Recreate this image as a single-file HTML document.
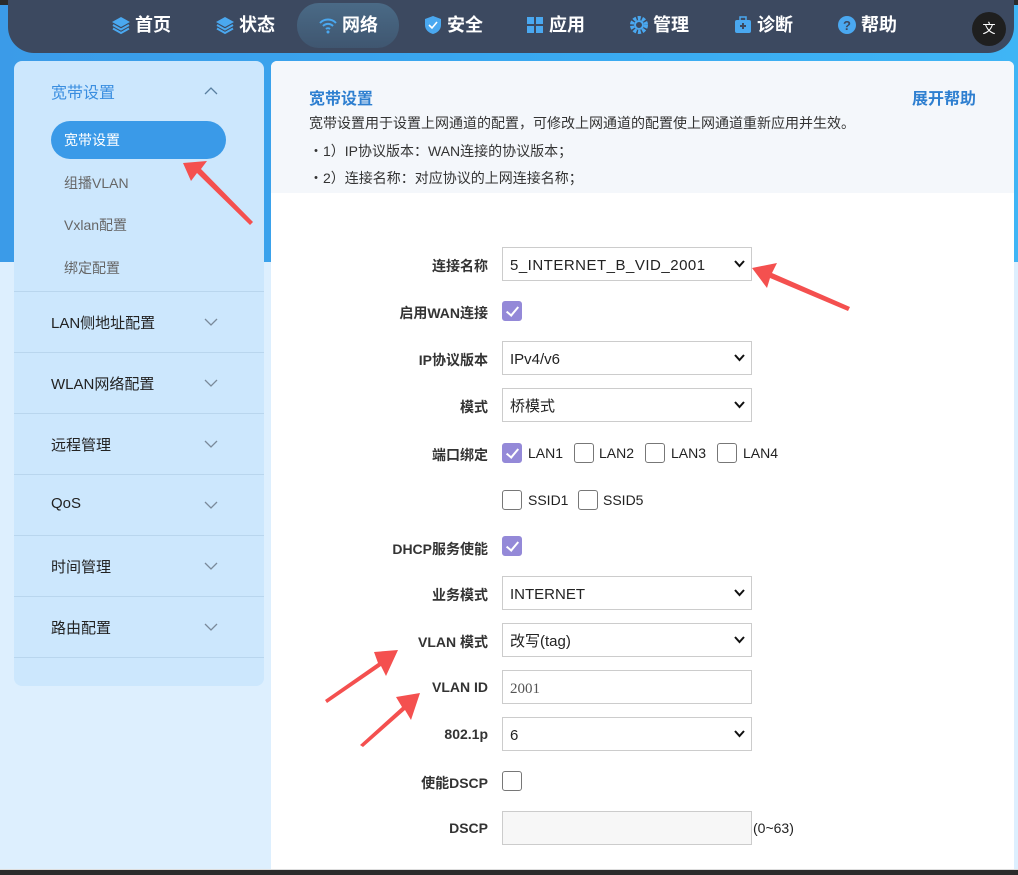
<!DOCTYPE html>
<html><head><meta charset="utf-8"><style>
*{margin:0;padding:0;box-sizing:border-box}
body{width:1018px;height:875px;overflow:hidden;position:relative;font-family:"Liberation Sans","Noto Sans CJK SC",sans-serif;background:#ddeffe}
.top{position:absolute;left:0;top:0;width:1018px;height:262px;background:linear-gradient(90deg,#3b9be8,#39a8f0 50%,#3fb5f5)}
.strip{position:absolute;left:0;top:0;width:1018px;height:5px;background:#2b2b2b}
.nav{position:absolute;left:8px;top:0;width:1006px;height:53px;background:#3c4960;border-radius:0 0 26px 26px}
.ni{position:absolute;top:13px;color:#fff;font-weight:bold;font-size:18px;line-height:24px;display:flex;align-items:center;gap:4px}
.ni svg{width:20px;height:20px}
.act{position:absolute;left:289px;top:3px;width:102px;height:45px;border-radius:22px;background:linear-gradient(#4a6a86,#3f5670)}
.side{position:absolute;left:14px;top:61px;width:250px;height:625px;background:#cce7fd;border-radius:8px}
.s1{position:absolute;left:37px;font-size:16px;color:#222}
.sub{position:absolute;left:50px;font-size:14px;color:#666}
.hr{position:absolute;left:0;width:250px;height:1px;background:#b9d6ee}
.chev{position:absolute;left:190px;width:14px;height:8px}
.main{position:absolute;left:271px;top:61px;width:743px;height:808px;background:#fff;border-radius:6px 6px 0 0}
.mh{position:absolute;left:0;top:0;width:743px;height:132px;background:#f4f7fb;border-radius:6px 6px 0 0}
.lab{position:absolute;right:530px;font-size:14px;font-weight:bold;color:#333;text-align:right;white-space:nowrap}
.fld{position:absolute;left:502px;width:250px;height:34px;border:1px solid #ccc;background:#fff;font-size:15px;color:#222;padding-left:7px;line-height:36px}
.fld .dd{position:absolute;right:6px;top:12px;width:11px;height:8px}
.cb{position:absolute;width:20px;height:20px;border:1px solid #777;border-radius:3px;background:#fff}
.cb.on{background:#9489d8;border-color:#9489d8}
.cb.on::after{content:"";position:absolute;left:6px;top:2px;width:5px;height:10px;border:solid #fff;border-width:0 2.5px 2.5px 0;transform:rotate(40deg)}
.cl{position:absolute;font-size:14px;color:#222}
.bot{position:absolute;left:0;top:869px;width:1018px;height:6px;background:#2b2b2b;border-top:1px solid #ddd}
</style></head><body>
<div class="top"></div>
<div class="strip"></div>
<div class="nav">
<div class="act"></div>
<div class="ni" style="left:103px"><svg viewBox="0 0 20 20"><path d="M10 2L19 7 10 12 1 7Z" fill="#4aa8f0"/><path d="M2 10l8 4.5 8-4.5M2 13.5l8 4.5 8-4.5" stroke="#4aa8f0" stroke-width="2" fill="none"/></svg>首页</div>
<div class="ni" style="left:207px"><svg viewBox="0 0 20 20"><path d="M10 2L19 7 10 12 1 7Z" fill="#4aa8f0"/><path d="M2 10l8 4.5 8-4.5M2 13.5l8 4.5 8-4.5" stroke="#4aa8f0" stroke-width="2" fill="none"/></svg>状态</div>
<div class="ni" style="left:310px"><svg viewBox="0 0 20 20"><path d="M2 8a11 11 0 0 1 16 0M5 11a7 7 0 0 1 10 0M8 14a3 3 0 0 1 4 0" stroke="#4aa8f0" stroke-width="2" fill="none"/><circle cx="10" cy="17" r="1.5" fill="#4aa8f0"/></svg>网络</div>
<div class="ni" style="left:415px"><svg viewBox="0 0 20 20"><path d="M10 1L18 4V10C18 15 14 18 10 19 6 18 2 15 2 10V4Z" fill="#4aa8f0"/><path d="M6 10l3 3 5-6" stroke="#fff" stroke-width="1.6" fill="none"/></svg>安全</div>
<div class="ni" style="left:517px"><svg viewBox="0 0 20 20"><rect x="2" y="2" width="7" height="7" fill="#4aa8f0"/><rect x="11" y="2" width="7" height="7" fill="#4aa8f0"/><rect x="2" y="11" width="7" height="7" fill="#4aa8f0"/><rect x="11" y="11" width="7" height="7" fill="#4aa8f0"/></svg>应用</div>
<div class="ni" style="left:621px"><svg viewBox="0 0 20 20"><circle cx="10" cy="10" r="7" stroke="#4aa8f0" stroke-width="4" fill="none" stroke-dasharray="3 1.5"/><circle cx="10" cy="10" r="4" stroke="#4aa8f0" stroke-width="2" fill="none"/></svg>管理</div>
<div class="ni" style="left:725px"><svg viewBox="0 0 20 20"><rect x="2" y="5" width="16" height="13" rx="2" fill="#4aa8f0"/><rect x="7" y="2" width="6" height="4" stroke="#4aa8f0" stroke-width="1.5" fill="none"/><path d="M10 8v6M7 11h6" stroke="#3c4960" stroke-width="2"/></svg>诊断</div>
<div class="ni" style="left:829px"><svg viewBox="0 0 20 20"><circle cx="10" cy="10" r="9" fill="#4aa8f0"/><text x="10" y="15" font-size="13" text-anchor="middle" fill="#3c4960" font-weight="bold" font-family="Liberation Sans">?</text></svg>帮助</div>
<div style="position:absolute;left:964px;top:12px;width:34px;height:34px;border-radius:17px;background:#1f1f1f;color:#fff;font-size:13px;text-align:center;line-height:34px">文</div>
</div>

<div class="side">
<div class="s1" style="top:18px;color:#3a8ee0">宽带设置</div>
<svg class="chev" style="top:26px" viewBox="0 0 14 8"><path d="M1 7L7 1 13 7" stroke="#5a7fa0" stroke-width="1.3" fill="none"/></svg>
<div style="position:absolute;left:37px;top:60px;width:175px;height:38px;border-radius:19px;background:#3a9ae8"></div>
<div class="sub" style="top:69px;color:#fff">宽带设置</div>
<div class="sub" style="top:112px">组播VLAN</div>
<div class="sub" style="top:154px">Vxlan配置</div>
<div class="sub" style="top:197px">绑定配置</div>
<div class="hr" style="top:230px"></div>
<div class="s1" style="top:251px;font-size:15px">LAN侧地址配置</div>
<div class="hr" style="top:291px"></div>
<div class="s1" style="top:312px;font-size:15px">WLAN网络配置</div>
<div class="hr" style="top:352px"></div>
<div class="s1" style="top:373px;font-size:15px">远程管理</div>
<div class="hr" style="top:413px"></div>
<div class="s1" style="top:434px;font-size:15px">QoS</div>
<div class="hr" style="top:474px"></div>
<div class="s1" style="top:495px;font-size:15px">时间管理</div>
<div class="hr" style="top:535px"></div>
<div class="s1" style="top:556px;font-size:15px">路由配置</div>
<div class="hr" style="top:596px"></div>
<svg class="chev" style="top:257px" viewBox="0 0 14 8"><path d="M1 1L7 7 13 1" stroke="#7a8a9a" stroke-width="1.3" fill="none"/></svg>
<svg class="chev" style="top:318px" viewBox="0 0 14 8"><path d="M1 1L7 7 13 1" stroke="#7a8a9a" stroke-width="1.3" fill="none"/></svg>
<svg class="chev" style="top:379px" viewBox="0 0 14 8"><path d="M1 1L7 7 13 1" stroke="#7a8a9a" stroke-width="1.3" fill="none"/></svg>
<svg class="chev" style="top:440px" viewBox="0 0 14 8"><path d="M1 1L7 7 13 1" stroke="#7a8a9a" stroke-width="1.3" fill="none"/></svg>
<svg class="chev" style="top:501px" viewBox="0 0 14 8"><path d="M1 1L7 7 13 1" stroke="#7a8a9a" stroke-width="1.3" fill="none"/></svg>
<svg class="chev" style="top:562px" viewBox="0 0 14 8"><path d="M1 1L7 7 13 1" stroke="#7a8a9a" stroke-width="1.3" fill="none"/></svg>
</div>

<div class="main"><div class="mh">
<div style="position:absolute;left:38px;top:24px;font-size:16px;font-weight:bold;color:#2e7fd0">宽带设置</div>
<div style="position:absolute;right:38px;top:24px;font-size:16px;font-weight:bold;color:#2e7fd0">展开帮助</div>
<div style="position:absolute;left:38px;top:52px;font-size:14px;color:#333">宽带设置用于设置上网通道的配置，可修改上网通道的配置使上网通道重新应用并生效。</div>
<div style="position:absolute;left:38px;top:80px;font-size:14px;color:#333">・1）IP协议版本：WAN连接的协议版本；</div>
<div style="position:absolute;left:38px;top:107px;font-size:14px;color:#333">・2）连接名称：对应协议的上网连接名称；</div>
</div></div>

<div class="lab" style="top:256px">连接名称</div>
<div class="fld" style="top:247px;letter-spacing:.5px">5_INTERNET_B_VID_2001<svg class="dd" viewBox="0 0 11 8"><path d="M1 1l4.5 5L10 1" stroke="#111" stroke-width="2" fill="none"/></svg></div>
<div class="lab" style="top:303px">启用WAN连接</div>
<div class="cb on" style="left:502px;top:301px"></div>
<div class="lab" style="top:350px">IP协议版本</div>
<div class="fld" style="top:341px">IPv4/v6<svg class="dd" viewBox="0 0 11 8"><path d="M1 1l4.5 5L10 1" stroke="#111" stroke-width="2" fill="none"/></svg></div>
<div class="lab" style="top:397px">模式</div>
<div class="fld" style="top:388px">桥模式<svg class="dd" viewBox="0 0 11 8"><path d="M1 1l4.5 5L10 1" stroke="#111" stroke-width="2" fill="none"/></svg></div>
<div class="lab" style="top:445px">端口绑定</div>
<div class="cb on" style="left:502px;top:443px"></div><div class="cl" style="left:528px;top:445px">LAN1</div>
<div class="cb" style="left:574px;top:443px"></div><div class="cl" style="left:599px;top:445px">LAN2</div>
<div class="cb" style="left:645px;top:443px"></div><div class="cl" style="left:671px;top:445px">LAN3</div>
<div class="cb" style="left:717px;top:443px"></div><div class="cl" style="left:743px;top:445px">LAN4</div>
<div class="cb" style="left:502px;top:490px"></div><div class="cl" style="left:528px;top:492px">SSID1</div>
<div class="cb" style="left:578px;top:490px"></div><div class="cl" style="left:603px;top:492px">SSID5</div>
<div class="lab" style="top:539px">DHCP服务使能</div>
<div class="cb on" style="left:502px;top:536px"></div>
<div class="lab" style="top:585px">业务模式</div>
<div class="fld" style="top:576px">INTERNET<svg class="dd" viewBox="0 0 11 8"><path d="M1 1l4.5 5L10 1" stroke="#111" stroke-width="2" fill="none"/></svg></div>
<div class="lab" style="top:632px">VLAN 模式</div>
<div class="fld" style="top:623px">改写(tag)<svg class="dd" viewBox="0 0 11 8"><path d="M1 1l4.5 5L10 1" stroke="#111" stroke-width="2" fill="none"/></svg></div>
<div class="lab" style="top:679px">VLAN ID</div>
<div class="fld" style="top:670px;color:#555;font-family:'Liberation Serif',serif">2001</div>
<div class="lab" style="top:726px">802.1p</div>
<div class="fld" style="top:717px">6<svg class="dd" viewBox="0 0 11 8"><path d="M1 1l4.5 5L10 1" stroke="#111" stroke-width="2" fill="none"/></svg></div>
<div class="lab" style="top:773px">使能DSCP</div>
<div class="cb" style="left:502px;top:771px"></div>
<div class="lab" style="top:820px">DSCP</div>
<div class="fld" style="top:811px;background:#f7f7f7"></div>
<div class="cl" style="left:753px;top:820px">(0~63)</div>

<svg style="position:absolute;left:0;top:0" width="1018" height="875">
<g fill="#f4504f">
<path d="M183 163L207 161 201 169 253 222 250 225 197 173 191 181Z"/>
<path d="M752 268L777 263 772 273 850 307 848 311 770 278 767 288Z"/>
<path d="M398 650L374 652 378 663 325 700 327 703 381 666 386 676Z"/>
<path d="M420 693L396 697 402 707 360 745 363 747 405 710 411 720Z"/>
</g></svg>
<div class="bot"></div>
</body></html>
